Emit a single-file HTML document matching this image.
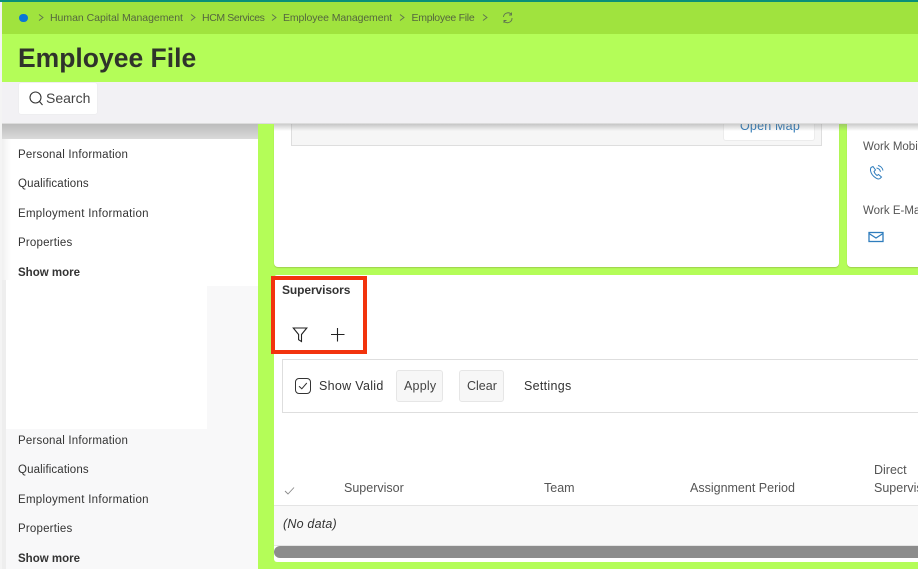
<!DOCTYPE html>
<html><head><meta charset="utf-8"><style>
html,body{margin:0;padding:0}
body{width:918px;height:569px;overflow:hidden;position:relative;background:#b4fd58;font-family:"Liberation Sans",sans-serif;color:#333}
div,span.t{position:absolute;white-space:nowrap}
.t{line-height:16px}
.n{font-size:11.5px;left:18px;color:#333;letter-spacing:.2px}
.b{font-weight:bold;letter-spacing:0}
.c{font-size:12.5px;color:#555;letter-spacing:0}
.bc{font-size:10.5px;color:#55663f;top:9.5px}
svg{position:absolute;overflow:visible}
</style></head><body>
<div style="left:0;top:0;width:918px;height:2px;background:#0a8f78"></div>
<div style="left:2px;top:2px;width:916px;height:32px;background:#a0e33e"></div>
<div style="left:0;top:2px;width:2px;height:567px;background:#f4f4f4"></div>
<div style="left:19px;top:13.500px;width:8.500px;height:8.500px;border-radius:50%;background:#0a76d6"></div>
<svg style="left:0;top:0" width="520" height="34" fill="none" stroke="#5f7350" stroke-width=".9"><path d="M39 14.500l4 3-4 3M191 14.500l4 3-4 3M272 14.500l4 3-4 3M400 14.500l4 3-4 3M483 14.500l4 3-4 3"/><path d="M503.500 17a4.500 4.500 0 0 1 8-2.500M512 18a4.500 4.500 0 0 1-8 3M511.500 12.500v2.500h-2.500M504 23v-2.500h2.500"/></svg>
<div class="t bc" style="left:50px;letter-spacing:-.03px">Human Capital Management</div>
<div class="t bc" style="left:202px;letter-spacing:-.38px">HCM Services</div>
<div class="t bc" style="left:283px;letter-spacing:-.1px">Employee Management</div>
<div class="t bc" style="left:411.500px;letter-spacing:-.28px">Employee File</div>
<div style="left:2px;top:34px;width:916px;height:48px;background:#b4fd58"></div>
<div class="t" style="left:18px;top:42px;font-size:26.500px;line-height:32px;font-weight:bold;color:#2f332b">Employee File</div>

<!-- left column -->
<div style="left:2px;top:124px;width:256px;height:445px;background:#f8f8f9"></div>
<div style="left:2px;top:124px;width:256px;height:15px;background:linear-gradient(#bcbcbc,#dadada)"></div>
<div style="left:2px;top:139px;width:256px;height:147px;background:#fff"></div>
<div style="left:2px;top:139px;width:9px;height:141px;background:linear-gradient(90deg,#f0f0f0,#fff)"></div>
<div style="left:2px;top:280px;width:4px;height:289px;background:#eeeeee"></div>
<div style="left:6px;top:280px;width:201px;height:149px;background:#fff"></div>
<div class="t n" style="top:147px">Personal Information</div>
<div class="t n" style="top:176px;letter-spacing:.12px">Qualifications</div>
<div class="t n" style="top:206px;letter-spacing:.28px">Employment Information</div>
<div class="t n" style="top:235px">Properties</div>
<div class="t n b" style="top:265px">Show more</div>
<div class="t n" style="top:433px">Personal Information</div>
<div class="t n" style="top:462px;letter-spacing:.12px">Qualifications</div>
<div class="t n" style="top:492px;letter-spacing:.28px">Employment Information</div>
<div class="t n" style="top:521px">Properties</div>
<div class="t n b" style="top:551px">Show more</div>

<!-- upper cards -->
<div style="left:274px;top:124px;width:565px;height:143px;background:#fff;border-radius:0 0 4px 4px;box-shadow:0 1px 1px #9fd04e"></div>
<div style="left:291px;top:124px;width:531px;height:22px;background:#f6f6f6;border:1px solid #dedede;border-top:0;box-sizing:border-box"></div>
<div style="left:723px;top:124px;width:92px;height:17px;background:#fff;border:1px solid #ececec;border-top:0;border-radius:0 0 3px 3px;box-sizing:border-box"></div>
<div class="t" style="left:740px;top:118px;font-size:12.500px;color:#2f7ab8;letter-spacing:.2px">Open Map</div>
<div style="left:847px;top:124px;width:71px;height:143px;background:#fff;border-radius:0 0 0 4px;box-shadow:0 1px 1px #9fd04e"></div>
<div style="left:274px;top:124px;width:644px;height:7px;background:linear-gradient(rgba(120,120,120,.38),rgba(160,160,160,0))"></div>
<!-- toolbar over scrolled content -->
<div style="left:2px;top:82px;width:916px;height:41px;background:#f2f1f4;border-bottom:1px solid #dcdcdc"></div>
<div style="left:19px;top:83px;width:78px;height:31px;background:#fff;border-radius:2px;box-shadow:0 0 1px #ddd"></div>
<svg style="left:0;top:0" width="100" height="110" fill="none" stroke="#333" stroke-width="1.100"><circle cx="35.500" cy="97.500" r="5.500"/><path d="M39.500 101.500l3 3.500"/></svg>
<div class="t" style="left:46px;top:90px;font-size:14px;color:#444">Search</div>

<div class="t c" style="left:863px;top:139px;font-size:11.500px">Work Mobile</div>
<div class="t c" style="left:863px;top:203px;font-size:11.500px">Work E-Mail</div>
<svg style="left:868.500px;top:165px" width="15" height="15" fill="none" stroke="#2f7dbd" stroke-width="1"><path d="M2 2.500l2-1 2.500 3.500-1.500 1.500c.5 1.500 1.500 3 3 4l1.500-1 3 2.500-1.500 1.500c-1 .7-2.500.5-4-.4-3-1.800-5-4.500-5.500-7.500-.2-1.200 0-2.100.5-3.100z"/><path d="M7.500 3c2 .3 3.500 1.700 4 3.700M9 .5c2.500.5 4.500 2.500 5 5"/></svg>
<svg style="left:868px;top:231px" width="16" height="12" fill="none" stroke="#2f7dbd" stroke-width="1.300"><rect x="1" y="1.500" width="14" height="9"/><path d="M1 2.500l7 4.500 7-4.500"/></svg>

<!-- supervisors panel -->
<div style="left:274px;top:275px;width:644px;height:287px;background:#fff;border-radius:3px 0 0 3px"></div>
<div class="t b" style="left:282px;top:282px;font-size:12px;color:#333;letter-spacing:-.1px">Supervisors</div>
<div style="left:271px;top:276px;width:96px;height:78px;box-sizing:border-box;border:4px solid #f2330d"></div>
<svg style="left:290px;top:324px" width="60" height="20" fill="none" stroke="#222" stroke-width="1.100"><path d="M3.300 4h13.500l-5.300 6.500v7l-2.900-1.800v-5.200z"/><path d="M47.500 4v13.500M41 10.500h13.500"/></svg>
<div style="left:282px;top:359px;width:636px;height:54px;box-sizing:border-box;border:1px solid #dedede;border-right:0"></div>
<div style="left:295px;top:378px;width:16px;height:16px;box-sizing:border-box;border:1.300px solid #333;border-radius:4px"></div>
<svg style="left:295px;top:378px" width="16" height="16" fill="none" stroke="#333" stroke-width="1"><path d="M4 8.200l2.800 2.600 5-5.800"/></svg>
<div class="t" style="left:319px;top:378px;font-size:12.500px;color:#333;letter-spacing:.3px">Show Valid</div>
<div style="left:396px;top:370px;width:47px;height:32px;box-sizing:border-box;background:#f7f7f7;border:1px solid #e6e6e6;border-radius:3px"></div>
<div class="t" style="left:404px;top:378px;font-size:12.500px;color:#444;letter-spacing:.2px">Apply</div>
<div style="left:459px;top:370px;width:45px;height:32px;box-sizing:border-box;background:#f7f7f7;border:1px solid #e6e6e6;border-radius:3px"></div>
<div class="t" style="left:467px;top:378px;font-size:12.500px;color:#444;letter-spacing:0">Clear</div>
<div class="t" style="left:524px;top:378px;font-size:12.500px;color:#333;letter-spacing:.3px">Settings</div>
<svg style="left:284px;top:486px" width="12" height="10" fill="none" stroke="#888" stroke-width=".9"><path d="M1 5l3 3 6-6.500"/></svg>
<div class="t c" style="left:344px;top:480px">Supervisor</div>
<div class="t c" style="left:544px;top:480px">Team</div>
<div class="t c" style="left:690px;top:480px">Assignment Period</div>
<div class="t c" style="left:874px;top:462px">Direct</div>
<div class="t c" style="left:874px;top:480px">Supervisor</div>
<div style="left:274px;top:505px;width:644px;height:41px;box-sizing:border-box;background:#f8f8f8;border-top:1px solid #e4e4e4;border-bottom:1px solid #e4e4e4"></div>
<div class="t" style="left:283px;top:516px;font-size:12.500px;font-style:italic;color:#333;letter-spacing:.2px">(No data)</div>
<div style="left:274px;top:546px;width:644px;height:12px;background:#8c8c8c;border-radius:6px 0 0 6px"></div>
</body></html>
